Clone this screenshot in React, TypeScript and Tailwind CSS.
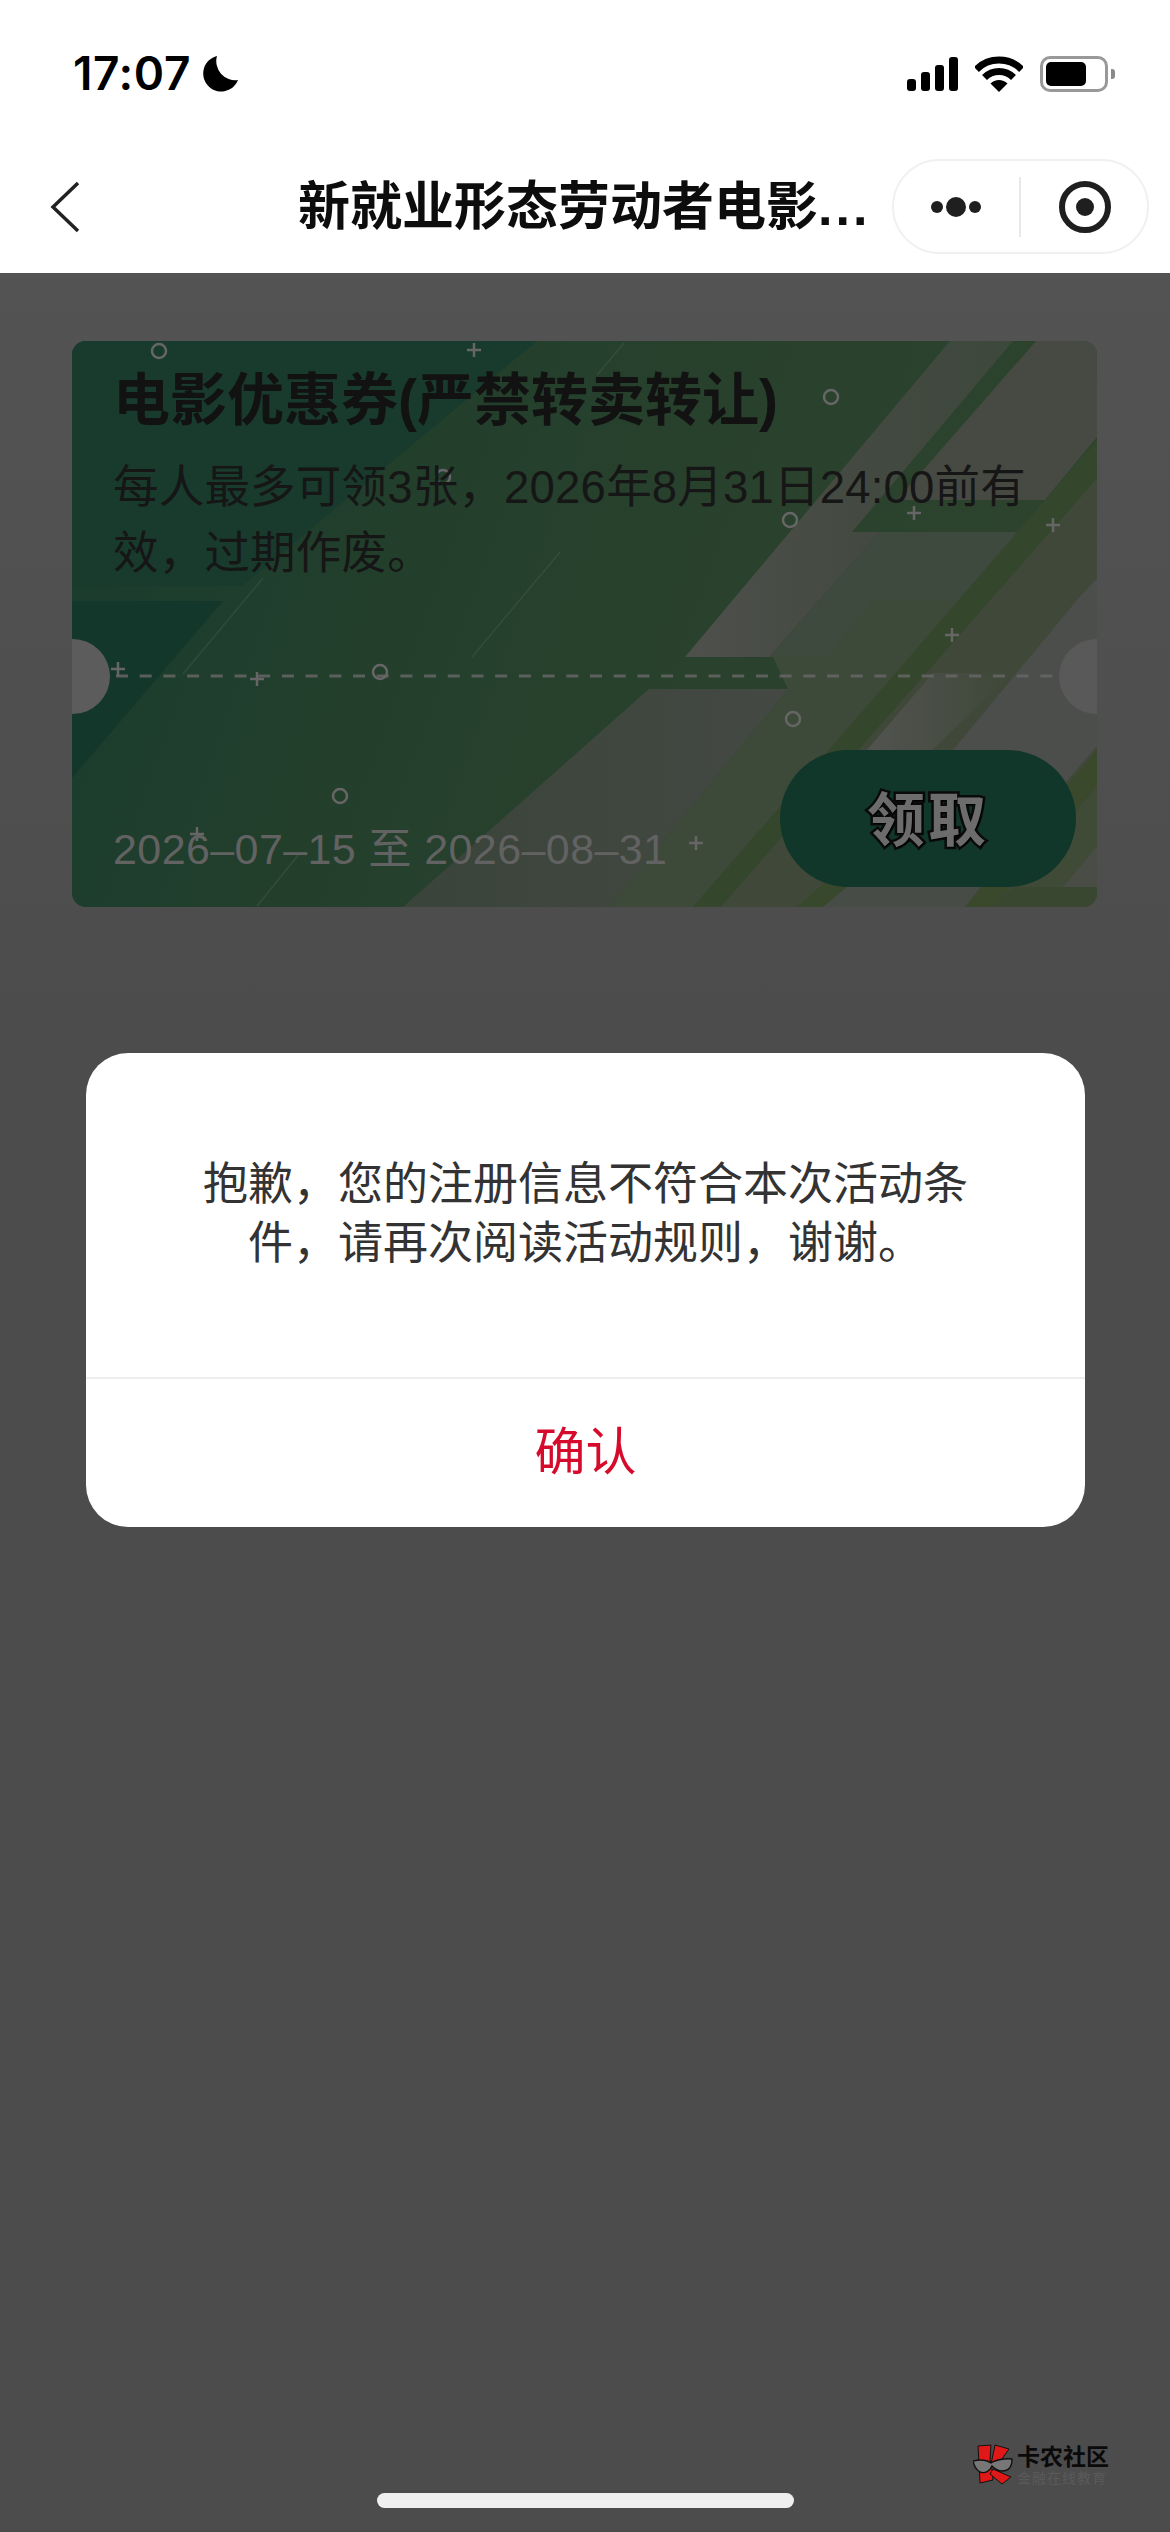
import React from 'react';

const SANS = "font-['Liberation_Sans','Noto_Sans_CJK_SC',sans-serif]";

const circles = [
  [87, 10], [371, 136], [308, 331], [268, 455], [759, 56], [718, 179], [721, 378],
];
const pluses = [
  [402, 9], [46, 328], [185, 338], [125, 493], [842, 172], [981, 184], [880, 294], [624, 502],
];

const CardArt = () => (
  <svg className="absolute inset-0" width="1025" height="566" viewBox="0 0 1025 566" fill="none">
    <defs>
      <linearGradient id="band" x1="0" y1="0" x2="1" y2="0">
        <stop offset="0" stopColor="#4e504c" />
        <stop offset="0.45" stopColor="#454a42" />
        <stop offset="1" stopColor="#3d483c" />
      </linearGradient>
      <linearGradient id="edge" x1="0" y1="0" x2="1" y2="0">
        <stop offset="0" stopColor="#3a443a" />
        <stop offset="1" stopColor="#444943" />
      </linearGradient>
      <linearGradient id="glow" x1="0" y1="0" x2="1" y2="0">
        <stop offset="0" stopColor="#525350" />
        <stop offset="1" stopColor="#3f4838" />
      </linearGradient>
    </defs>
    <polygon points="0,0 465,0 170,245 0,245" fill="#183b2e" />
    <polygon points="0,260 151,260 0,437" fill="#14372b" />
    {/* upper bands */}
    <polygon points="878,0 941,0 780,191 808,191 697,316 613,316" fill="url(#band)" />
    <polygon points="808,191 950,191 839,316 697,316" fill="#3f4a3e" />
    <polygon points="964,0 1025,0 1025,96 973,159 825,159" fill="#464a42" />
    {/* lower right fields, split by the long stripe */}
    <polygon points="801,259 891,259 621,566 537,566 716,348 701,316 755,316" fill="#3e4a39" />
    <polygon points="1025,137 1025,566 648,566" fill="#3f4839" />
    <polygon points="1025,99 1025,137 648,566 621,566" fill="#34472d" />
    <polygon points="861,332 940,332 860,409 795,409" fill="url(#glow)" />
    <polygon points="1005,259 1025,237 1025,405 960,480 830,500 881,409" fill="#4c4e4b" />
    <polygon points="577,348 716,348 537,566 331,566" fill="url(#edge)" />
    <polygon points="800,500 830,500 751,566 725,566" fill="#38482c" />
    <polygon points="830,500 960,480 893,566 751,566" fill="#484c46" />
    <polygon points="1025,409 1025,445 920,566 893,566" fill="#3a482c" />
    <polygon points="1025,445 1025,546 940,546" fill="#3f4a37" />
    <polygon points="1025,505 1025,546 991,546" fill="#4a4c46" />
    <polygon points="920,566 940,546 1025,546 1025,566" fill="#3a4730" />
    <g stroke="#ffffff" strokeOpacity="0.07" strokeWidth="1.5">
      <line x1="111" y1="333" x2="191" y2="237" />
      <line x1="400" y1="316" x2="488" y2="211" />
      <line x1="185" y1="565" x2="228" y2="512" />
      <line x1="525" y1="34" x2="552" y2="2" />
    </g>
    <line x1="44" y1="335" x2="985" y2="335" stroke="#666666" strokeOpacity="0.85" strokeWidth="3" strokeDasharray="12 11.7" />
    {circles.map(([cx, cy]) => (
      <circle key={`${cx}-${cy}`} cx={cx} cy={cy} r="7" stroke="#666666" strokeWidth="2.5" />
    ))}
    {pluses.map(([x, y]) => (
      <path key={`${x}-${y}`} d={`M${x - 7} ${y}h14M${x} ${y - 7}v14`} stroke="#666666" strokeWidth="2.5" />
    ))}
  </svg>
);

const StatusIcons = () => (
  <div className="flex items-center">
    <svg width="51" height="34" viewBox="0 0 51 34" fill="#000">
      <rect x="0" y="22" width="9" height="12" rx="3" />
      <rect x="14" y="15" width="9" height="19" rx="3" />
      <rect x="28" y="8" width="9" height="26" rx="3" />
      <rect x="42" y="0" width="9" height="34" rx="3" />
    </svg>
    <svg className="ml-[17px]" width="48" height="36" viewBox="0 0 48 36" fill="none">
      <path d="M1.4 13.4A32 32 0 0 1 46.6 13.4" stroke="#000" strokeWidth="7" />
      <path d="M9.5 21.5A20.5 20.5 0 0 1 38.5 21.5" stroke="#000" strokeWidth="7" />
      <path d="M24 36L15.5 27.5A12 12 0 0 1 32.5 27.5Z" fill="#000" />
    </svg>
    <div className="ml-[17px] flex items-center">
      <div className="flex h-[36px] w-[68px] items-center rounded-[10px] border-[3px] border-[#999999] p-[3px]">
        <div className="h-[24px] w-[40px] rounded-[5px] bg-black" />
      </div>
      <div className="ml-[3px] h-[10px] w-[4px] rounded-r-[3px] bg-[#8a8a8a]" />
    </div>
  </div>
);

const Capsule = () => (
  <div className="ml-auto flex h-[95px] w-[257px] items-center rounded-full border-2 border-[#f0f0f0] bg-white">
    <div className="flex flex-1 items-center justify-center gap-[3px]">
      <span className="h-[12px] w-[12px] rounded-full bg-[#1f1f1f]" />
      <span className="h-[20px] w-[20px] rounded-full bg-[#1f1f1f]" />
      <span className="h-[12px] w-[12px] rounded-full bg-[#1f1f1f]" />
    </div>
    <div className="h-[60px] w-[2px] bg-[#e8e8e8]" />
    <div className="flex flex-1 items-center justify-center pl-[2px]">
      <div className="flex h-[52px] w-[52px] items-center justify-center rounded-full border-[6px] border-[#1f1f1f]">
        <span className="h-[18px] w-[18px] rounded-full bg-[#1f1f1f]" />
      </div>
    </div>
  </div>
);

const Watermark = () => (
  <div className="absolute left-[973px] top-[2444px] flex items-start">
    <svg width="40" height="41" viewBox="0 0 40 41">
      <polygon points="5,2 18,1 17,16 19,25 20,36 7,39" fill="#e01818" stroke="#111" strokeWidth="1" />
      <polygon points="22,1 36,5 24,22 18,20" fill="#e01818" stroke="#111" strokeWidth="1" />
      <polygon points="20,25 38,33 29,40 17,30" fill="#e01818" stroke="#111" strokeWidth="1" />
      <path d="M0 17C8 15 14 16 18 19C22 16 32 14 39 15C39 22 36 27 29 27C24 27 21 24 19 22C17 27 12 30 7 28C3 26 1 22 0 17Z" fill="#777" stroke="#111" strokeWidth="1.4" />
    </svg>
    <div className="ml-[4px] flex flex-col font-['Noto_Sans_CJK_SC',sans-serif]">
      <span className="text-[23px] font-bold leading-[23px] text-[#0a0a0a]">卡农社区</span>
      <span className="mt-[2px] text-[14px] leading-[16px] tracking-[1px] text-[#5a5a5a]">金融在线教育</span>
    </div>
  </div>
);

const Coupon = () => (
  <div className="relative h-[566px] w-[1025px] overflow-hidden rounded-[14px] bg-[linear-gradient(110deg,#183b2e_0%,#223f2c_30%,#28412d_55%,#30442e_100%)]">
    <CardArt />
    <div className="absolute left-[-37px] top-[298px] h-[75px] w-[75px] rounded-full bg-[#5c5c5c]" />
    <div className="absolute right-[-37px] top-[298px] h-[75px] w-[75px] rounded-full bg-[#595959]" />
    <div className="relative flex h-full flex-col pl-[41px] pr-[21px] pt-[26px]">
      <h2 className="text-[57px] font-bold leading-[66px] text-[#121212]">电影优惠券(严禁转卖转让)</h2>
      <p className="mt-[22px] w-[940px] text-[45.5px] leading-[66px] tracking-[0.2px] text-[#161616]">每人最多可领3张，2026年8月31日24:00前有效，过期作废。</p>
      <div className="mt-auto mb-[20px] flex items-center justify-between">
        <span className="mt-[60px] text-[43px] leading-[50px] tracking-[0.4px] text-[#626262]">2026–07–15 至 2026–08–31</span>
        <button className="flex h-[137px] w-[296px] items-center justify-center rounded-full bg-[#11362a] pt-[3px] text-[58px] font-bold tracking-[3px] text-[#6c6c6c] [-webkit-text-stroke:5px_#0a0a0a] [paint-order:stroke_fill] [text-shadow:1px_1px_0_#000]">领取</button>
      </div>
    </div>
  </div>
);

export default function App() {
  return (
    <div className={`relative flex h-[2532px] w-[1170px] flex-col overflow-hidden bg-[#4c4c4c] ${SANS}`}>
      <header className="flex h-[273px] shrink-0 flex-col bg-white">
        <div className="flex h-[37px] mt-[55px] items-center justify-between pl-[73px] pr-[55px]">
          <div className="flex items-center">
            <span className="font-['Inter',sans-serif] text-[46px] font-semibold leading-[37px] tracking-[0.6px] text-black">17:07</span>
            <svg className="ml-[11px]" width="36" height="36" viewBox="0 0 36 36">
              <path d="M15 0A18 18 0 1 0 36 24A19 19 0 0 1 15 0Z" fill="#000" />
            </svg>
          </div>
          <StatusIcons />
        </div>
        <nav className="mt-[67px] flex h-[95px] items-center pl-[50px] pr-[21px]">
          <svg width="30" height="52" viewBox="0 0 30 52" fill="none">
            <path d="M28 2L3 26L28 50" stroke="#222" strokeWidth="3.5" />
          </svg>
          <h1 className="ml-[218px] whitespace-nowrap text-[52px] font-bold leading-[60px] text-[#0d0d0d]">
            新就业形态劳动者电影<span className="tracking-[3px]">...</span>
          </h1>
          <Capsule />
        </nav>
      </header>

      <main className="flex-1 bg-[linear-gradient(180deg,#535353_0%,#4c4c4c_35%)] pl-[72px] pt-[68px]">
        <Coupon />
      </main>

      {/* dialog over the page */}
      <div className="absolute left-[86px] top-[1053px] flex h-[474px] w-[999px] flex-col rounded-[42px] bg-white">
        <div className="flex h-[324px] justify-center px-[104px] pt-[102px] text-center text-[45px] leading-[59px] text-[#333333]">
          <p>抱歉，您的注册信息不符合本次活动条件，请再次阅读活动规则，谢谢。</p>
        </div>
        <button className="flex flex-1 items-center justify-center border-t-2 border-[#eeeeee] text-[51px] text-[#d60b2c]">确认</button>
      </div>

      <Watermark />
      <div className="absolute left-[377px] top-[2493px] h-[15px] w-[417px] rounded-full bg-[#efefef]" />
    </div>
  );
}
